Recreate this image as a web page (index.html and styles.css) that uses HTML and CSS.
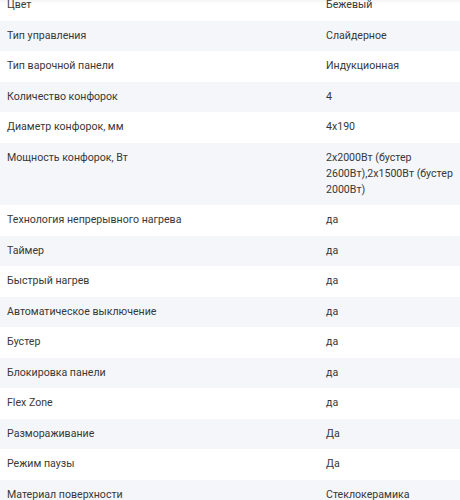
FILE: index.html
```html
<!DOCTYPE html>
<html lang="ru">
<head>
<meta charset="utf-8">
<link rel="stylesheet" href="styles.css">
</head>
<body>
<div class="specs">
  <div class="row"><div class="name">Цвет</div><div class="val">Бежевый</div></div>
  <div class="row"><div class="name">Тип управления</div><div class="val">Слайдерное</div></div>
  <div class="row"><div class="name">Тип варочной панели</div><div class="val">Индукционная</div></div>
  <div class="row"><div class="name">Количество конфорок</div><div class="val">4</div></div>
  <div class="row"><div class="name">Диаметр конфорок, мм</div><div class="val">4x190</div></div>
  <div class="row"><div class="name">Мощность конфорок, Вт</div><div class="val">2x2000Вт (бустер 2600Вт),2x1500Вт (бустер 2000Вт)</div></div>
  <div class="row"><div class="name">Технология непрерывного нагрева</div><div class="val">да</div></div>
  <div class="row"><div class="name">Таймер</div><div class="val">да</div></div>
  <div class="row"><div class="name">Быстрый нагрев</div><div class="val">да</div></div>
  <div class="row"><div class="name">Автоматическое выключение</div><div class="val">да</div></div>
  <div class="row"><div class="name">Бустер</div><div class="val">да</div></div>
  <div class="row"><div class="name">Блокировка панели</div><div class="val">да</div></div>
  <div class="row"><div class="name">Flex Zone</div><div class="val">да</div></div>
  <div class="row"><div class="name">Размораживание</div><div class="val">Да</div></div>
  <div class="row"><div class="name">Режим паузы</div><div class="val">Да</div></div>
  <div class="row"><div class="name">Материал поверхности</div><div class="val">Стеклокерамика</div></div>
</div>
<div class="shade"></div>
</body>
</html>
```
FILE: styles.css
```css
html, body {
  margin: 0;
  padding: 0;
  background: #fff;
}
body {
  font-family: Roboto, "Noto Sans", sans-serif;
  font-size: 10.6px;
  color: #383838;
  overflow: hidden;
}
.specs {
  margin-top: -10px;
}
.row {
  display: grid;
  grid-template-columns: 319px 1fr;
  line-height: 16px;
}
.row:nth-child(even) {
  background: #f5f6fa;
}
.name, .val {
  padding: 7.25px 7px;
}
.val {
  padding-right: 2px;
}
.shade {
  position: fixed;
  top: 0;
  left: 0;
  right: 0;
  height: 4px;
  background: linear-gradient(rgba(0,0,0,0.04), rgba(0,0,0,0));
}
```
